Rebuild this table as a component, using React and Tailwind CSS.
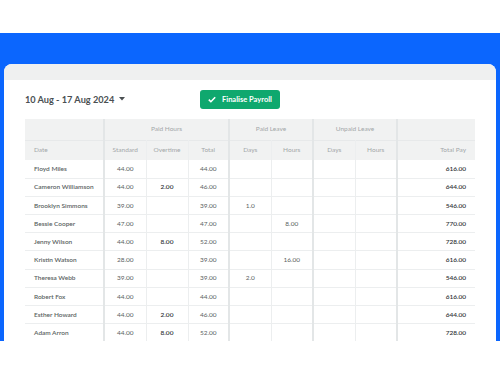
import React from 'react';

const rows = [
  { name: 'Floyd Miles', std: '44.00', ot: '', total: '44.00', plDays: '', plHours: '', pay: '616.00' },
  { name: 'Cameron Williamson', std: '44.00', ot: '2.00', total: '46.00', plDays: '', plHours: '', pay: '644.00' },
  { name: 'Brooklyn Simmons', std: '39.00', ot: '', total: '39.00', plDays: '1.0', plHours: '', pay: '546.00' },
  { name: 'Bessie Cooper', std: '47.00', ot: '', total: '47.00', plDays: '', plHours: '8.00', pay: '770.00' },
  { name: 'Jenny Wilson', std: '44.00', ot: '8.00', total: '52.00', plDays: '', plHours: '', pay: '728.00' },
  { name: 'Kristin Watson', std: '28.00', ot: '', total: '39.00', plDays: '', plHours: '16.00', pay: '616.00' },
  { name: 'Theresa Webb', std: '39.00', ot: '', total: '39.00', plDays: '2.0', plHours: '', pay: '546.00' },
  { name: 'Robert Fox', std: '44.00', ot: '', total: '44.00', plDays: '', plHours: '', pay: '616.00' },
  { name: 'Esther Howard', std: '44.00', ot: '2.00', total: '46.00', plDays: '', plHours: '', pay: '644.00' },
  { name: 'Adam Arron', std: '44.00', ot: '8.00', total: '52.00', plDays: '', plHours: '', pay: '728.00' },
];

export default function App() {
  const group = 'border-l-2 border-[#e3e6e7]';
  const thin = 'border-l border-[#eceeef]';

  return (
    <div className="w-[500px] h-[375px] bg-white" style={{ fontFamily: 'Lato, "Noto Sans", sans-serif' }}>
      <div className="h-[33px]" />
      <div className="h-[308px] bg-[#0b66fe] overflow-hidden pt-[31px]">
        <div className="mx-1 bg-white rounded-t-lg overflow-hidden h-full">
          <div className="h-4 bg-[#eff0f0]" />
          <div className="px-[21px] pt-[10px]">
            {/* Header */}
            <div className="flex items-center h-[19px]">
              <div className="w-[175px] flex items-center gap-[5px] text-[9.2px] font-bold text-[#4a4f52]">
                10 Aug - 17 Aug 2024
                <svg width="6" height="4" viewBox="0 0 6 4">
                  <path d="M0 0h6L3 3.5z" fill="#4a4f52" />
                </svg>
              </div>
              <button className="h-[19px] w-[80px] rounded-[3px] bg-[#0fa86e] text-white text-[7.5px] font-bold flex items-center justify-center gap-[6px]">
                <svg width="8" height="7" viewBox="0 0 8 7" fill="none">
                  <path d="M0.8 3.6L2.9 5.7L7.2 1.2" stroke="white" strokeWidth="1.6" />
                </svg>
                Finalise Payroll
              </button>
            </div>

            {/* Table */}
            <table className="mt-[10px] w-[450px] table-fixed border-collapse text-[6.5px]">
              <colgroup>
                <col className="w-[79px]" />
                <col className="w-[42px]" />
                <col className="w-[42px]" />
                <col className="w-[41px]" />
                <col className="w-[42px]" />
                <col className="w-[42px]" />
                <col className="w-[42px]" />
                <col className="w-[42px]" />
                <col className="w-[78px]" />
              </colgroup>
              <thead className="bg-[#f1f2f2] text-[#a3a7a9]">
                <tr className="h-[21px] border-b border-[#e7e9ea]">
                  <th />
                  <th colSpan={3} className={`${group} font-normal`}>Paid Hours</th>
                  <th colSpan={2} className={`${group} font-normal`}>Paid Leave</th>
                  <th colSpan={2} className={`${group} font-normal`}>Unpaid Leave</th>
                  <th className={group} />
                </tr>
                <tr className="h-5">
                  <th className="text-left pl-[9px] font-normal">Date</th>
                  <th className={`${group} font-normal`}>Standard</th>
                  <th className={`${thin} font-normal`}>Overtime</th>
                  <th className={`${thin} font-normal`}>Total</th>
                  <th className={`${group} font-normal`}>Days</th>
                  <th className={`${thin} font-normal`}>Hours</th>
                  <th className={`${group} font-normal`}>Days</th>
                  <th className={`${thin} font-normal`}>Hours</th>
                  <th className={`${group} font-normal text-right pr-[9px]`}>Total Pay</th>
                </tr>
              </thead>
              <tbody className="text-[#5a5f62] text-center">
                {rows.map((r) => (
                  <tr key={r.name} className="h-[18.2px] border-b border-[#eceeef]">
                    <td className="text-left pl-[9px] font-semibold">{r.name}</td>
                    <td className={group}>{r.std}</td>
                    <td className={`${thin} font-semibold text-[6.5px] text-[#2f3335]`}>{r.ot}</td>
                    <td className={thin}>{r.total}</td>
                    <td className={group}>{r.plDays}</td>
                    <td className={thin}>{r.plHours}</td>
                    <td className={group} />
                    <td className={thin} />
                    <td className={`${group} text-right pr-[9px] font-semibold text-[6.5px] text-[#2f3335]`}>{r.pay}</td>
                  </tr>
                ))}
              </tbody>
            </table>
          </div>
        </div>
      </div>
    </div>
  );
}
